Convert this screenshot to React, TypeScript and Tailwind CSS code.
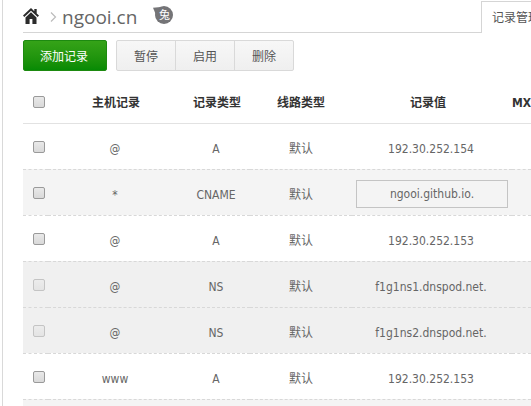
import React from "react";

type DnsRecord = {
  host: string;
  type: string;
  line: string;
  value: string;
  tone?: "hover" | "locked";
};

const records: DnsRecord[] = [
  { host: "@", type: "A", line: "默认", value: "192.30.252.154" },
  { host: "*", type: "CNAME", line: "默认", value: "ngooi.github.io.", tone: "hover" },
  { host: "@", type: "A", line: "默认", value: "192.30.252.153" },
  { host: "@", type: "NS", line: "默认", value: "f1g1ns1.dnspod.net.", tone: "locked" },
  { host: "@", type: "NS", line: "默认", value: "f1g1ns2.dnspod.net.", tone: "locked" },
  { host: "www", type: "A", line: "默认", value: "192.30.252.153" },
];

function Check({ label, disabled }: { label: string; disabled?: boolean }) {
  return (
    <input
      type="checkbox"
      aria-label={label}
      disabled={disabled}
      className="block size-3 appearance-none rounded-[2px] border border-[#9a9a9a] bg-linear-to-b from-[#e9e9e9] to-[#d9d9d9] checked:bg-[#777] disabled:border-[#c4c4c4] disabled:from-[#ececec] disabled:to-[#e4e4e4]"
    />
  );
}

function HomeIcon() {
  return (
    <svg width="16" height="16" viewBox="0 0 16 16" fill="#2b2b2b" aria-hidden="true">
      <path d="M8 0 0 7.6 1.3 9 8 2.7 14.7 9 16 7.6 13.7 5.4V1h-2.4v2.2Z" />
      <path d="M8 4.2 2.5 9.4V16h4.1v-5h2.8v5h4.1V9.4Z" />
    </svg>
  );
}

function RabbitBadge() {
  return (
    <span className="relative ml-4 flex h-5 w-5 items-center justify-center">
      <svg className="absolute inset-0" width="21" height="20" viewBox="0 0 21 20" aria-hidden="true">
        <circle cx="11" cy="9" r="9" fill="#747477" />
        <path d="M0 1.8 8 1 2.6 8Z" fill="#747477" />
      </svg>
      <span className="relative pl-[2px] text-[11px] leading-5 text-white">兔</span>
    </span>
  );
}

export default function App() {
  const toolButton =
    "h-full flex-none px-[17px] text-[#555] border-[#d9d9d9] not-first:border-l";
  return (
    <div className="pl-[2px] overflow-hidden bg-white font-['DejaVu_Sans_Condensed','Noto_Sans_CJK_SC',sans-serif] text-xs text-[#666]">
      <div className="h-screen overflow-hidden border-l border-[#d9d9d9] pl-5">
        <header className="flex h-[33px]">
          <div className="flex flex-1 items-center border-b border-[#d5d5d5]">
            <a href="#" aria-label="首页" className="block">
              <HomeIcon />
            </a>
            <svg className="ml-[11px] mt-[2px]" width="7" height="10" viewBox="0 0 7 10" fill="none" aria-hidden="true">
              <path d="M1 0.5 5.5 5 1 9.5" stroke="#bbb" strokeWidth="1.2" />
            </svg>
            <h1 className="ml-[5px] pt-px font-['Open_Sans',sans-serif] text-[19px] leading-8 text-[#666]">
              ngooi.cn
            </h1>
            <RabbitBadge />
          </div>
          <nav className="mt-px w-[50px] overflow-hidden border-t border-l border-[#d5d5d5] pl-[10px]">
            <a href="#" className="block leading-8 whitespace-nowrap text-[#555]">
              记录管理
            </a>
          </nav>
        </header>

        <div className="mt-[7px] flex h-[31px] gap-[9px]">
          <button
            type="button"
            className="w-[84px] rounded-[2px] border border-[#1d8a10] bg-linear-to-b from-[#35a318] to-[#068a04] pt-[2px] pr-[2px] text-white"
          >
            添加记录
          </button>
          <div className="flex rounded-[2px] border border-[#d9d9d9] bg-linear-to-b from-[#f7f7f7] to-[#efefef]">
            <button type="button" className={`${toolButton} pt-[2px]`}>暂停</button>
            <button type="button" className={`${toolButton} pt-[2px]`}>启用</button>
            <button type="button" className={`${toolButton} pt-[2px]`}>删除</button>
          </div>
        </div>

        <table className="mt-[10px] w-full table-fixed border-collapse text-center">
          <colgroup>
            <col className="w-[25px]" />
            <col className="w-[134px]" />
            <col className="w-[68px]" />
            <col className="w-[102px]" />
            <col />
            <col className="w-[19px]" />
          </colgroup>
          <thead>
            <tr className="h-[42px] border-b border-[#e2e2e2] text-[#333]">
              <th className="pt-px pl-[10px]">
                <Check label="全选" />
              </th>
              <th className="pt-[3px] pl-[2px]">主机记录</th>
              <th className="pt-[3px] pl-[2px] whitespace-nowrap">记录类型</th>
              <th className="pt-[3px]">线路类型</th>
              <th className="pt-[3px] pr-2">记录值</th>
              <th className="overflow-hidden pt-[3px] text-left">MX</th>
            </tr>
          </thead>
          <tbody>
            {records.map((r, i) => (
              <tr
                key={i}
                className={`h-[46px] border-b border-dashed border-[#d8d8d8] ${
                  r.tone === "hover" ? "bg-[#f4f4f4]" : r.tone === "locked" ? "bg-[#f0f0f0]" : ""
                }`}
              >
                <td className="pt-[2px] pl-[10px]">
                  <Check label={`选择 ${r.host} ${r.type}`} disabled={r.tone === "locked"} />
                </td>
                <td className="pt-[5px]">{r.host}</td>
                <td className="pt-[5px]">{r.type}</td>
                <td className="pt-[5px]">{r.line}</td>
                <td className={r.tone === "hover" ? "px-1 pt-[3px]" : "pt-[5px] pr-[2px]"}>
                  {r.tone === "hover" ? (
                    <input
                      type="text"
                      aria-label="记录值"
                      defaultValue={r.value}
                      className="block h-7 w-full border border-[#c4c4c4] bg-transparent pt-px text-center"
                    />
                  ) : (
                    r.value
                  )}
                </td>
                <td />
              </tr>
            ))}
            <tr className="h-[46px] bg-[#f4f4f4]">
              <td colSpan={6} />
            </tr>
          </tbody>
        </table>
      </div>
    </div>
  );
}
